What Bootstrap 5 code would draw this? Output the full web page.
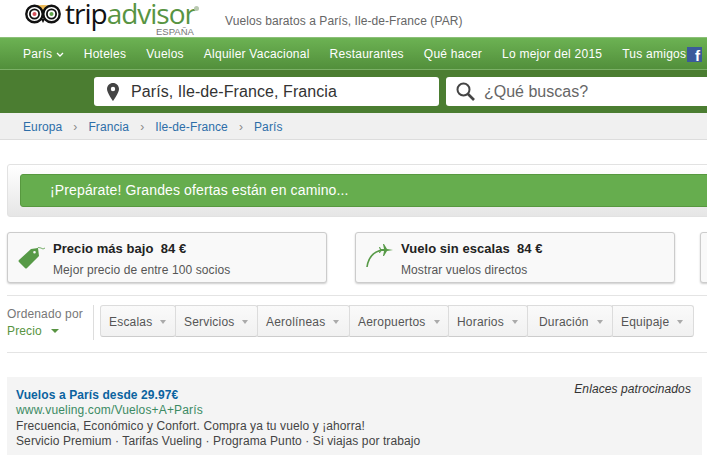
<!DOCTYPE html>
<html lang="es">
<head>
    <meta charset="UTF-8">
    <meta name="viewport" content="width=device-width, initial-scale=1.0">
    <title>Vuelos baratos a París</title>
    <link href="https://cdn.jsdelivr.net/npm/bootstrap@5.3.3/dist/css/bootstrap.min.css" rel="stylesheet">
    <style>
        html, body { height: 455px; overflow: hidden; }
        body {
            font-family: "Liberation Sans", Arial, sans-serif;
            font-size: 12px;
            color: #333;
            background: #fff;
        }
        /* header */
        .top-head { height: 37px; padding-left: 25px; }
        .owl { width: 36px; height: 20px; margin-top: 4px; flex: none; }
        .brand-box { width: 135px; margin-left: 4px; position: relative; height: 37px; }
        .brand-name {
            font-family: "Open Sans", sans-serif;
            font-size: 28px;
            line-height: 26px;
            letter-spacing: -1px;
            color: #111;
            white-space: nowrap;
        }
        .brand-name span { color: #589442; }
        .brand-reg { position: absolute; left: 129px; top: 6px; width: 5px; height: 5px; border-radius: 50%; background: #b9c9b0; }
        .brand-country { position: absolute; left: 91px; top: 26px; font-size: 9.5px; line-height: 11px; color: #777; }
        .head-title { font-size: 12px; color: #666; margin-left: 25px; margin-top: 12px; letter-spacing: 0.08px; white-space: nowrap; }
        /* nav */
        .green-nav {
            height: 33px;
            padding-left: 23px;
            gap: 20px;
            background: linear-gradient(#6cb253, #528f3b);
            border-top: 1px solid #8cc078;
            border-bottom: 1px solid #7bb066;
            white-space: nowrap;
        }
        .green-nav a { color: #fff; font-size: 12px; text-decoration: none; letter-spacing: 0.24px; }
        .nav-chev { width: 8px; height: 5px; vertical-align: 1px; }
        .fb-box {
            width: 15px; height: 15px; margin-left: 1px;
            background: #3b5a9a; color: #fff;
            font-weight: 700; font-size: 15px; line-height: 17px; text-align: right; padding-right: 2px;
            display: inline-block; vertical-align: -3px;
        }
        /* search */
        .search-band { height: 43px; background: #4b7d31; padding: 7px 0 0 94px; gap: 7px; overflow: hidden; }
        .search-field {
            height: 29px; background: #fff; border-radius: 3px; flex: none;
            font-size: 16px; padding-left: 13px; white-space: nowrap;
        }
        .search-place { width: 345px; color: #333; letter-spacing: 0.08px; }
        .search-what { width: 265px; color: #666; padding-left: 10px; }
        .pin-ico { width: 12px; height: 18px; margin-right: 12px; }
        .glass-ico { width: 19px; height: 19px; margin-right: 9px; }
        /* breadcrumbs */
        .crumb-band { height: 27px; background: #f0f0f0; border-bottom: 1px solid #ddd; padding-left: 23px; }
        .crumb-band .breadcrumb { --bs-breadcrumb-divider: "›"; --bs-breadcrumb-margin-bottom: 0; --bs-breadcrumb-item-padding-x: 11px; font-size: 12px; line-height: 28px; letter-spacing: 0.1px; }
        .crumb-band .breadcrumb-item::before { color: #888; }
        .crumb-band a { color: #2d6ea8; text-decoration: none; }
        /* promo */
        .promo-wrap {
            margin: 24px 0 0 7px; width: 720px; height: 53px; padding: 9px 0 0 12px;
            border: 1px solid #e2e2e2; border-radius: 3px;
            background: linear-gradient(#fff, #e6e6e6);
        }
        .promo-bar {
            height: 33px; line-height: 31px; padding-left: 29px;
            background: #66ad4e; border: 1px solid #57983f; border-radius: 3px;
            color: #fff; font-size: 14px; letter-spacing: 0.13px;
        }
        /* quick cards */
        .deal-row { margin: 15px 0 0 7px; width: 760px; white-space: nowrap; }
        .deal-card {
            width: 320px; height: 51px; flex: none; flex-direction: row;
            background: #f9f9f9; border: 1px solid #ccc; border-radius: 3px;
            box-shadow: 0 1px 2px rgba(0,0,0,.2);
            padding: 7px 0 0 10px;
        }
        .deal-card + .deal-card { margin-left: 28px; }
        .deal-card:last-child { margin-left: 25px; }
        .deal-ico { width: 28px; height: 26px; margin: 7px 7px 0 0; flex: none; overflow: visible; }
        .deal-head { font-size: 13px; font-weight: 700; line-height: 18px; color: #222; letter-spacing: 0.05px; }
        .deal-sub { font-size: 12px; line-height: 18px; margin-top: 3px; color: #555; letter-spacing: 0.1px; }
        .rule-line { margin: 12px 0 0 7px; border-top: 1px solid #e4e4e4; }
        /* sort + filters */
        .filter-row { margin: 9px 0 0 7px; height: 48px; border-bottom: 1px solid #e4e4e4; }
        .sort-box { width: 87px; height: 35px; padding-top: 1px; border-right: 1px solid #ddd; line-height: 16px; color: #777; font-size: 12px; letter-spacing: 0.15px; }
        .sort-box div:last-child { color: #589442; margin-top: 1px; }
        .sort-caret { display: inline-block; margin-left: 6px; border: 4px solid transparent; border-top: 4px solid #589442; border-bottom: 0; vertical-align: 2px; width: 0; }
        .filter-group { margin-left: 6px; height: 32px; }
        .filter-group .btn {
            --bs-btn-border-radius: 3px;
            background: linear-gradient(#fafafa, #f1f1f1);
            border: 1px solid #dcdcdc;
            border-bottom-color: #ccc;
            color: #555; font-size: 12px; letter-spacing: 0.2px;
            padding: 1px 0 0 8px; text-align: left; flex: none;
        }
        .filter-group .btn::after {
            margin-left: 8px; vertical-align: 2px;
            border-top: 4px solid #aaa; border-left: 3px solid transparent; border-right: 3px solid transparent; border-bottom: 0;
        }
        .w-esc { width: 76px; }
        .w-ser { width: 83px; }
        .w-aer { width: 93px; }
        .w-apt { width: 100px; }
        .w-hor { width: 80px; }
        .w-dur { width: 86px; padding-left: 11px !important; }
        .w-equ { width: 82px; }
        /* sponsored */
        .ad-box { margin: 24px 0 0 7px; width: 695px; height: 90px; background: #f4f4f4; padding: 11px 0 0 9px; position: relative; line-height: 15.3px; color: #444; letter-spacing: 0.1px; }
        .ad-label { position: absolute; right: 11px; top: 5px; font-style: italic; color: #333; }
        .ad-title { color: #0b63a0; font-weight: 700; text-decoration: none; display: block; }
        .ad-url { color: #3b8a63; letter-spacing: 0.15px; }
    </style>
</head>
<body>
    <div class="top-head d-flex">
        <svg class="owl" viewBox="0 0 36 20">
            <path d="M9 2 Q18 0 27 2 L18 12 Z" fill="#eebb55"/>
            <circle cx="9.5" cy="10" r="8.2" fill="#fff" stroke="#111" stroke-width="2.4"/>
            <circle cx="26.5" cy="10" r="8.2" fill="#fff" stroke="#111" stroke-width="2.4"/>
            <circle cx="9.5" cy="10" r="4.6" fill="none" stroke="#111" stroke-width="1.8"/>
            <circle cx="26.5" cy="10" r="4.6" fill="none" stroke="#111" stroke-width="1.8"/>
            <circle cx="9.5" cy="10" r="2" fill="#d6505a"/>
            <circle cx="26.5" cy="10" r="2" fill="#5fa34a"/>
            <path d="M16 15 L18 19 L20 15 Z" fill="#111"/>
        </svg>
        <div class="brand-box">
            <div class="brand-name">trip<span>advisor</span></div>
            <i class="brand-reg"></i>
            <div class="brand-country">ESPAÑA</div>
        </div>
        <div class="head-title">Vuelos baratos a París, Ile-de-France (PAR)</div>
    </div>

    <nav class="green-nav d-flex align-items-center">
        <a href="#">París <svg class="nav-chev" viewBox="0 0 8 5"><path d="M1 1 L4 4 L7 1" fill="none" stroke="#fff" stroke-width="1.3"/></svg></a>
        <a href="#">Hoteles</a>
        <a href="#">Vuelos</a>
        <a href="#">Alquiler Vacacional</a>
        <a href="#">Restaurantes</a>
        <a href="#">Qué hacer</a>
        <a href="#">Lo mejor del 2015</a>
        <a href="#">Tus amigos<span class="fb-box">f</span></a>
    </nav>

    <div class="search-band d-flex">
        <div class="search-field search-place d-flex align-items-center">
            <svg class="pin-ico" viewBox="0 0 12 18"><path fill-rule="evenodd" d="M6 0 C2.7 0 0 2.6 0 6 C0 10 6 18 6 18 C6 18 12 10 12 6 C12 2.6 9.3 0 6 0 Z M6 3.8 A2.2 2.2 0 1 1 6 8.2 A2.2 2.2 0 1 1 6 3.8 Z" fill="#444"/></svg>
            París, Ile-de-France, Francia
        </div>
        <div class="search-field search-what d-flex align-items-center">
            <svg class="glass-ico" viewBox="0 0 19 19"><circle cx="7.5" cy="7.5" r="6" fill="none" stroke="#444" stroke-width="2"/><path d="M12 12 L18 18" stroke="#444" stroke-width="2.6"/></svg>
            ¿Qué buscas?
        </div>
    </div>

    <div class="crumb-band">
        <ol class="breadcrumb">
            <li class="breadcrumb-item"><a href="#">Europa</a></li>
            <li class="breadcrumb-item"><a href="#">Francia</a></li>
            <li class="breadcrumb-item"><a href="#">Ile-de-France</a></li>
            <li class="breadcrumb-item"><a href="#">París</a></li>
        </ol>
    </div>

    <div class="promo-wrap">
        <div class="promo-bar">¡Prepárate! Grandes ofertas están en camino...</div>
    </div>

    <div class="deal-row d-flex">
        <div class="card deal-card">
            <svg class="deal-ico" viewBox="0 2 28 26"><path fill-rule="evenodd" d="M1 15 L13 4 L20 3 L21 11 L9 23 Q8 24 7 23 L1 17 Q0 16 1 15 Z M16.5 6 A1.3 1.3 0 1 0 16.5 8.6 A1.3 1.3 0 1 0 16.5 6 Z" fill="#579a47"/><path d="M18 5 Q20 1 23 3 Q25 5 27 3" fill="none" stroke="#579a47" stroke-width="0.8"/></svg>
            <div>
                <div class="deal-head">Precio más bajo&nbsp; 84 €</div>
                <div class="deal-sub">Mejor precio de entre 100 socios</div>
            </div>
        </div>
        <div class="card deal-card">
            <svg class="deal-ico" viewBox="0 0 28 26"><path d="M1 20 Q3 5 17 3" fill="none" stroke="#579a47" stroke-width="1.6"/><path transform="translate(0,-4)" d="M27 7 L21 6 L18 1 L17 1 L18 6 L15 6 L14 4 L13 4 L14 7 L13 10 L14 10 L15 8 L18 8 L17 13 L18 13 L21 8 Z" fill="#579a47"/></svg>
            <div>
                <div class="deal-head">Vuelo sin escalas&nbsp; 84 €</div>
                <div class="deal-sub">Mostrar vuelos directos</div>
            </div>
        </div>
        <div class="card deal-card"></div>
    </div>
    <div class="rule-line"></div>

    <div class="filter-row d-flex">
        <div class="sort-box">
            <div>Ordenado por</div>
            <div>Precio <i class="sort-caret"></i></div>
        </div>
        <div class="btn-group filter-group">
            <button type="button" class="btn dropdown-toggle w-esc">Escalas</button>
            <button type="button" class="btn dropdown-toggle w-ser">Servicios</button>
            <button type="button" class="btn dropdown-toggle w-aer">Aerolíneas</button>
            <button type="button" class="btn dropdown-toggle w-apt">Aeropuertos</button>
            <button type="button" class="btn dropdown-toggle w-hor">Horarios</button>
            <button type="button" class="btn dropdown-toggle w-dur">Duración</button>
            <button type="button" class="btn dropdown-toggle w-equ">Equipaje</button>
        </div>
    </div>

    <div class="ad-box">
        <div class="ad-label">Enlaces patrocinados</div>
        <a class="ad-title" href="#">Vuelos a París desde 29.97€</a>
        <div class="ad-url">www.vueling.com/Vuelos+A+París</div>
        <div>Frecuencia, Económico y Confort. Compra ya tu vuelo y ¡ahorra!</div>
        <div>Servicio Premium · Tarifas Vueling · Programa Punto · Si viajas por trabajo</div>
    </div>

    <script src="https://cdn.jsdelivr.net/npm/bootstrap@5.3.3/dist/js/bootstrap.bundle.min.js"></script>
</body>
</html>
